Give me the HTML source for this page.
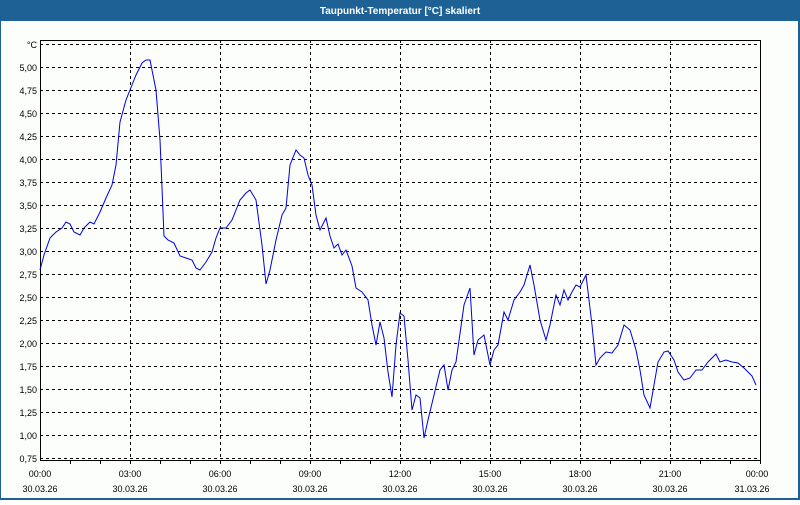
<!DOCTYPE html>
<html><head><meta charset="utf-8"><style>
body{margin:0;width:800px;height:500px;overflow:hidden;background:#fff;font-family:"Liberation Sans",sans-serif}
</style></head><body>
<svg width="800" height="500" xmlns="http://www.w3.org/2000/svg" font-family="Liberation Sans, sans-serif">
<rect x="0" y="0" width="800" height="500" fill="#1e6295"/>
<rect x="1" y="21" width="797" height="477" fill="#fbfefb"/>
<text x="400" y="14" fill="#fff" font-size="10" font-weight="bold" text-anchor="middle">Taupunkt-Temperatur [°C] skaliert</text>
<g stroke="#000" stroke-width="1" stroke-dasharray="3,3" fill="none">
<path d="M40 44.5H760M40 67.5H760M40 90.5H760M40 113.5H760M40 136.5H760M40 159.5H760M40 182.5H760M40 205.5H760M40 228.5H760M40 251.5H760M40 274.5H760M40 297.5H760M40 320.5H760M40 343.5H760M40 366.5H760M40 389.5H760M40 412.5H760M40 435.5H760M40 458.5H760"/>
<path d="M130.5 40V460M220.5 40V460M310.5 40V460M400.5 40V460M490.5 40V460M580.5 40V460M670.5 40V460"/>
</g>
<path d="M40.5 40V460.5H760.5V40" stroke="#000" fill="none"/>
<path d="M40.5 40.5H760" stroke="#000" fill="none"/>
<g stroke="#000"><path d="M70.5 460v4M100.5 460v4M130.5 460v4M160.5 460v4M190.5 460v4M220.5 460v4M250.5 460v4M280.5 460v4M310.5 460v4M340.5 460v4M370.5 460v4M400.5 460v4M430.5 460v4M460.5 460v4M490.5 460v4M520.5 460v4M550.5 460v4M580.5 460v4M610.5 460v4M640.5 460v4M670.5 460v4M700.5 460v4M730.5 460v4M760.5 460v4"/></g>
<g font-size="9" fill="#000" text-anchor="end">
<text x="37" y="48">°C</text><text x="37" y="71">5,00</text><text x="37" y="94">4,75</text><text x="37" y="117">4,50</text><text x="37" y="140">4,25</text><text x="37" y="163">4,00</text><text x="37" y="186">3,75</text><text x="37" y="209">3,50</text><text x="37" y="232">3,25</text><text x="37" y="255">3,00</text><text x="37" y="278">2,75</text><text x="37" y="301">2,50</text><text x="37" y="324">2,25</text><text x="37" y="347">2,00</text><text x="37" y="370">1,75</text><text x="37" y="393">1,50</text><text x="37" y="416">1,25</text><text x="37" y="439">1,00</text><text x="37" y="462">0,75</text>
</g>
<g font-size="9" fill="#000" text-anchor="middle">
<text x="40" y="477">00:00</text><text x="40" y="492">30.03.26</text>
<text x="130" y="477">03:00</text><text x="130" y="492">30.03.26</text>
<text x="220" y="477">06:00</text><text x="220" y="492">30.03.26</text>
<text x="310" y="477">09:00</text><text x="310" y="492">30.03.26</text>
<text x="400" y="477">12:00</text><text x="400" y="492">30.03.26</text>
<text x="490" y="477">15:00</text><text x="490" y="492">30.03.26</text>
<text x="580" y="477">18:00</text><text x="580" y="492">30.03.26</text>
<text x="670" y="477">21:00</text><text x="670" y="492">30.03.26</text>
<text x="757" y="477">00:00</text><text x="752" y="492">31.03.26</text>
</g>
<polyline fill="none" stroke="#0000e0" stroke-width="1" points="40,270 44,255 50,238 56,232 62,228 66,222 70,224 74,232 80,235 84,228 90,222 94,224 100,212 106,198 112,185 116,165 120,122 126,100 130,90 136,75 142,63 146,60 150,60 156,90 160,140 164,236 168,240 174,243 180,256 186,258 192,260 196,268 200,270 206,262 212,252 216,238 220,228 226,228 232,220 240,200 246,193 250,190 256,200 262,245 266,284 270,270 276,240 282,215 286,208 290,165 296,150 300,155 304,158 308,175 312,185 316,215 320,230 326,218 330,236 334,248 338,244 342,255 346,250 352,266 356,288 362,292 368,300 372,325 376,345 380,322 384,338 388,372 392,397 396,345 400,313 404,316 408,360 412,410 416,395 420,398 424,438 428,420 434,395 440,370 444,365 448,390 452,370 456,362 464,305 470,288 474,355 478,340 484,335 490,365 494,350 498,345 504,312 508,320 514,300 520,292 524,285 530,265 534,285 540,320 546,340 550,325 556,295 560,305 564,290 568,300 572,292 576,285 580,287 586,275 592,325 596,365 600,358 606,352 612,353 618,345 624,325 630,330 636,350 640,370 644,395 650,408 654,385 658,362 664,352 668,351 674,360 678,372 684,380 690,378 696,370 702,370 708,362 712,358 716,354 720,362 726,360 732,362 738,363 744,368 748,372 752,376 756,385"/>
</svg>
</body></html>
